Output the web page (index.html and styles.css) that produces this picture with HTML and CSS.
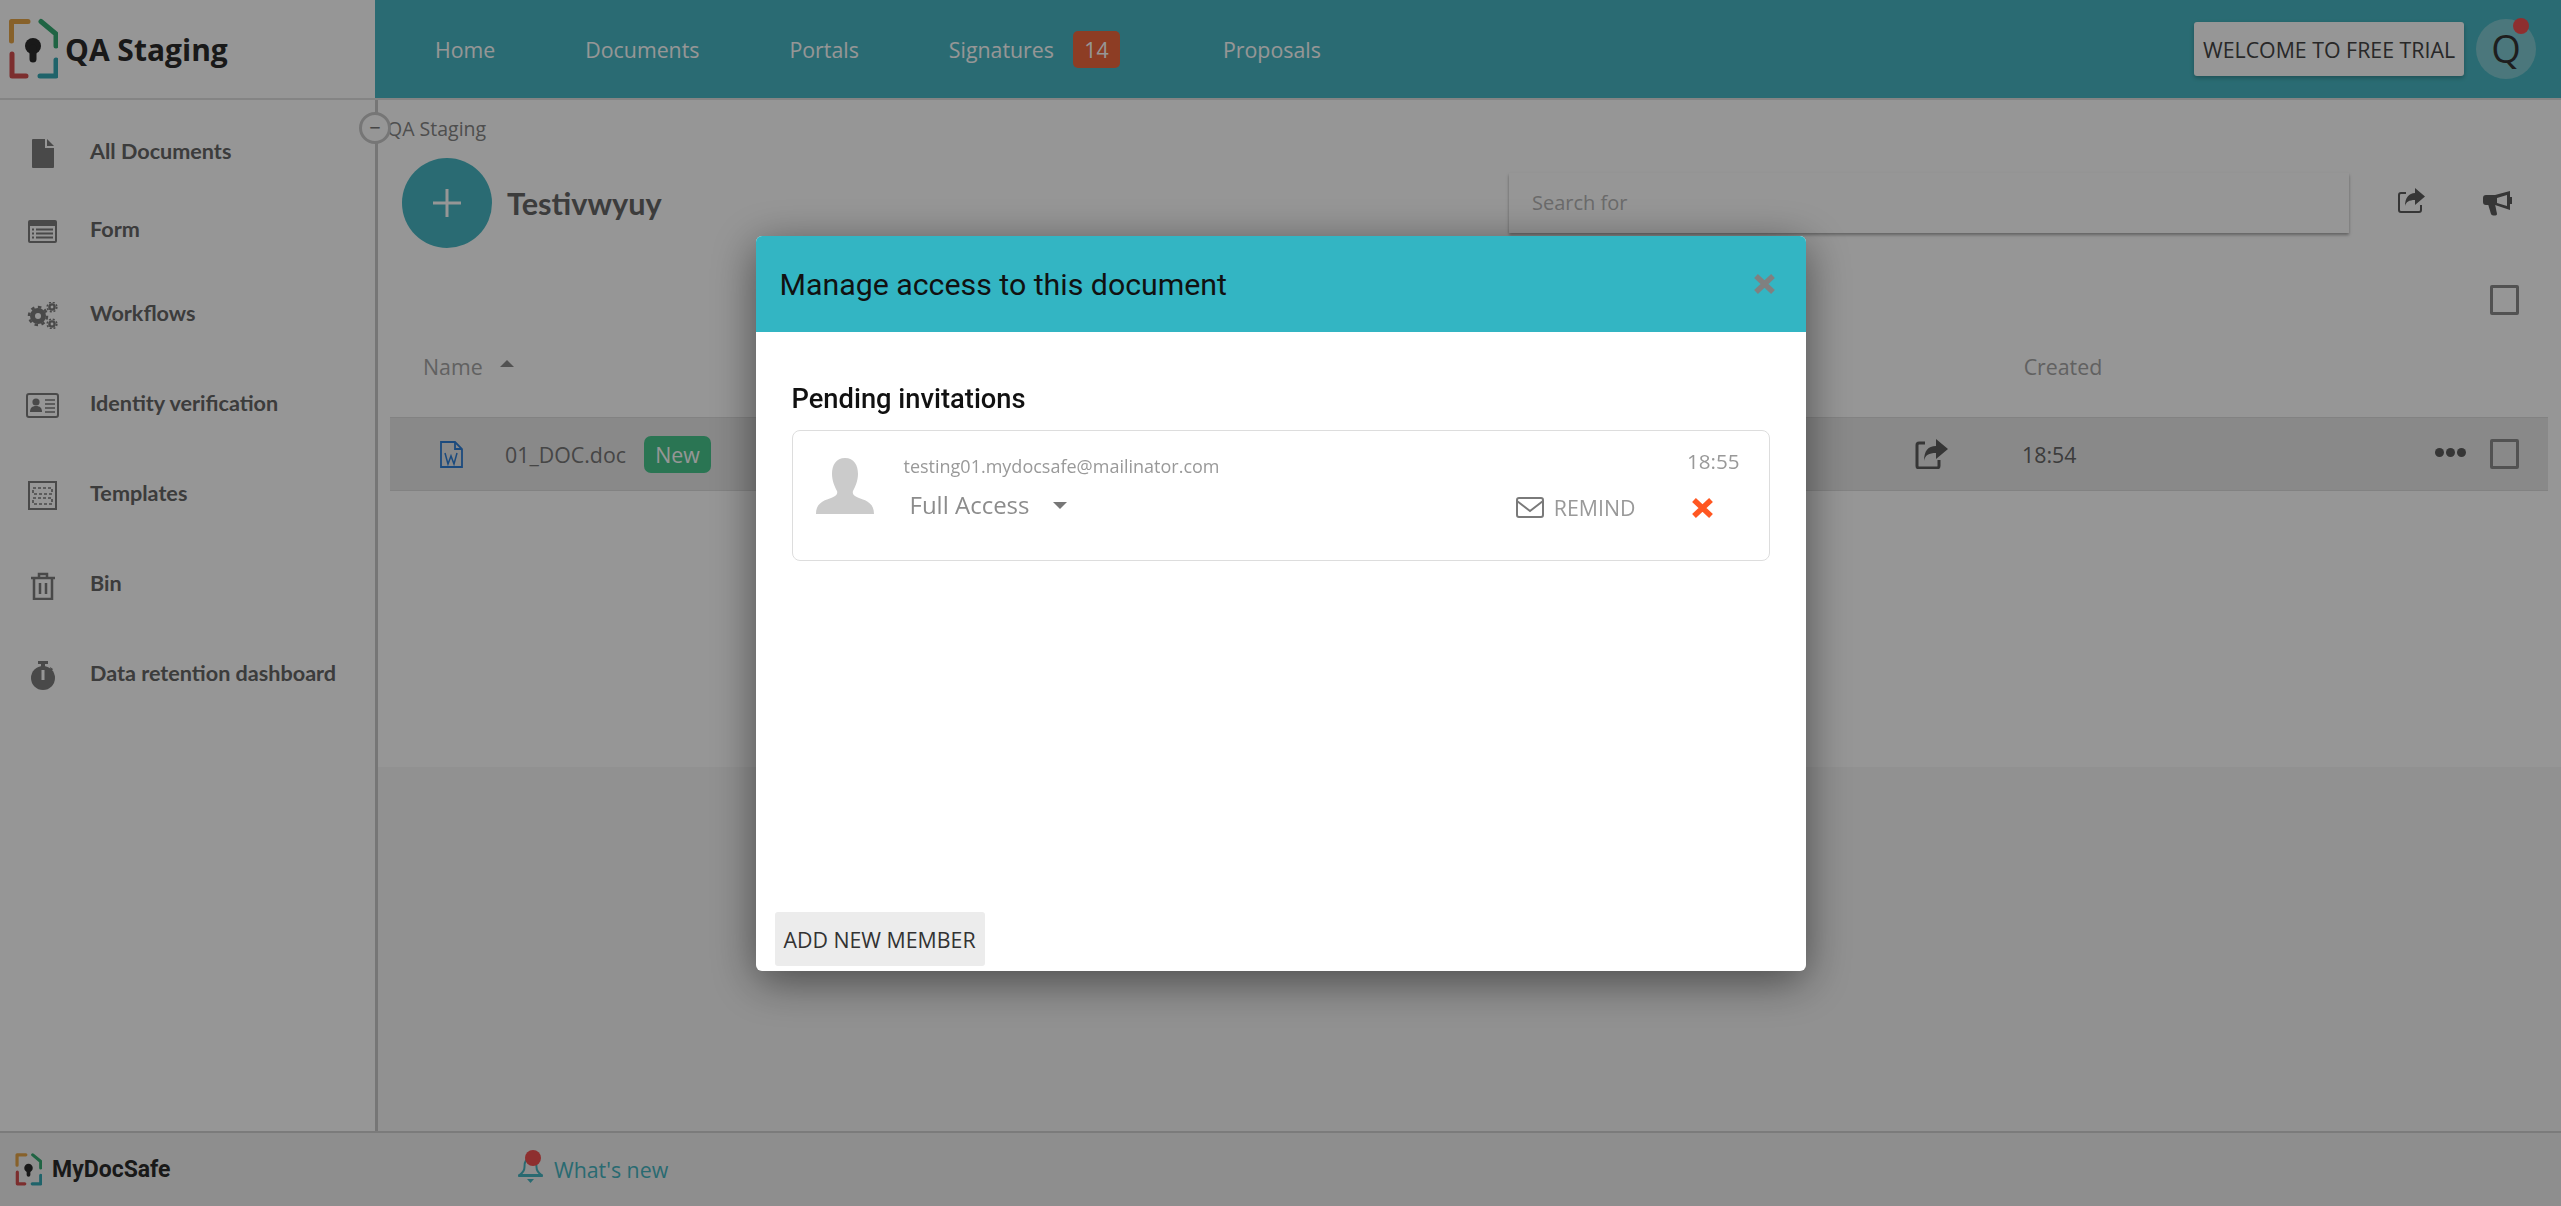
FILE: index.html
```html
<!DOCTYPE html>
<html lang="en">
<head>
    <meta charset="UTF-8">
    <meta name="viewport" content="width=device-width, initial-scale=1.0">
    <title>QA Staging</title>
    <link rel="stylesheet" href="styles.css">
</head>
<body>
    <div class="app">
        <header class="topbar">
            <div class="brand">
                <svg class="brand-logo" viewBox="0 0 50 62" fill="none" stroke-width="5" stroke-linecap="round" stroke-linejoin="round">
                    <path d="M3.5 23V3.5H20" stroke="#e6a548"/>
                    <path d="M33 3.5L48 16V28" stroke="#36ab72"/>
                    <path d="M48 42V58H32" stroke="#36a9b5"/>
                    <path d="M4 36V58H18" stroke="#d34f4f"/>
                    <circle cx="25" cy="28" r="8" fill="#2b2b2b" stroke="none"/>
                    <path d="M25 30V41" stroke="#2b2b2b" stroke-width="7"/>
                </svg>
                <span class="brand-name">QA Staging</span>
            </div>
            <nav class="topnav">
                <a href="#home">Home</a>
                <a href="#documents">Documents</a>
                <a href="#portals">Portals</a>
                <a href="#signatures" class="nav-sign">Signatures <span class="nav-badge">14</span></a>
                <a href="#proposals">Proposals</a>
                <button class="trial-btn">WELCOME TO FREE TRIAL</button>
                <div class="user-circle">Q<span class="user-dot"></span></div>
            </nav>
        </header>

        <div class="middle">
            <aside class="sidebar">
                <a class="side-item" href="#all">
                    <span class="side-icon"><svg width="22" height="29" viewBox="0 0 22 29"><path d="M1 0H13V9H22V28a1 1 0 0 1-1 1H1a1 1 0 0 1-1-1V1a1 1 0 0 1 1-1z" fill="#7d7d7d"/><path d="M15 0l7 7h-7z" fill="#7d7d7d"/></svg></span>
                    All Documents
                </a>
                <a class="side-item item-form" href="#form">
                    <span class="side-icon"><svg width="29" height="23" viewBox="0 0 29 23"><rect width="29" height="23" rx="2" fill="#7d7d7d"/><rect x="2" y="6" width="25" height="15" fill="#fff"/><path d="M4 9.500h2M8 9.500h17M4 13.500h2M8 13.500h17M4 17.500h2M8 17.500h17" stroke="#7d7d7d" stroke-width="2"/></svg></span>
                    Form
                </a>
                <a class="side-item item-flow" href="#workflows">
                    <span class="side-icon"><svg width="31" height="27" viewBox="0 0 31 27" fill="none" stroke="#7d7d7d"><circle cx="11" cy="14" r="5.500" stroke-width="5"/><circle cx="11" cy="14" r="9" stroke-width="2.500" stroke-dasharray="3.500 3.500"/><circle cx="25" cy="5" r="2.600" stroke-width="2.400"/><circle cx="25" cy="5" r="4.800" stroke-width="1.600" stroke-dasharray="2 1.800"/><circle cx="25" cy="22" r="2.600" stroke-width="2.400"/><circle cx="25" cy="22" r="4.800" stroke-width="1.600" stroke-dasharray="2 1.800"/></svg></span>
                    Workflows
                </a>
                <a class="side-item" href="#identity">
                    <span class="side-icon"><svg width="33" height="25" viewBox="0 0 33 25"><rect x="1" y="1" width="31" height="23" rx="2" fill="none" stroke="#7d7d7d" stroke-width="2"/><circle cx="10" cy="9" r="3.600" fill="#7d7d7d"/><path d="M4 19c0-4 2-6 6-6s6 2 6 6z" fill="#7d7d7d"/><path d="M19 7h10M19 11h10M19 15h10M19 19h10" stroke="#7d7d7d" stroke-width="1.600"/></svg></span>
                    Identity verification
                </a>
                <a class="side-item" href="#templates">
                    <span class="side-icon"><svg width="29" height="29" viewBox="0 0 29 29" fill="none" stroke="#7d7d7d"><rect x="1" y="1" width="27" height="27" stroke-width="2"/><rect x="5" y="7" width="19" height="6" stroke-width="1.600" stroke-dasharray="3 2"/><rect x="5" y="17" width="19" height="6" stroke-width="1.600" stroke-dasharray="3 2"/></svg></span>
                    Templates
                </a>
                <a class="side-item" href="#bin">
                    <span class="side-icon"><svg width="24" height="28" viewBox="0 0 24 28" fill="none" stroke="#7d7d7d" stroke-width="2.500"><path d="M0 6H24"/><path d="M8 5V2h8v3"/><path d="M3 6V27H21V6"/><path d="M9 11V22M15 11V22"/></svg></span>
                    Bin
                </a>
                <a class="side-item" href="#retention">
                    <span class="side-icon"><svg width="24" height="29" viewBox="0 0 24 29"><rect x="7" y="0" width="10" height="3" fill="#7d7d7d"/><rect x="10" y="2" width="4" height="4" fill="#7d7d7d"/><path d="M19 6l3 2-2 3z" fill="#7d7d7d"/><circle cx="12" cy="17" r="12" fill="#7d7d7d"/><rect x="10.500" y="9" width="3" height="10" fill="#fff"/></svg></span>
                    Data retention dashboard
                </a>
            </aside>

            <main class="content">
                <button class="collapse-btn">&minus;</button>
                <div class="docs-area">
                    <div class="crumb">QA Staging</div>
                    <div class="title-row">
                        <button class="add-btn"><svg width="28" height="28" viewBox="0 0 28 28"><path d="M14 0V28M0 14H28" stroke="#fff" stroke-width="3"/></svg></button>
                        <h1>Testivwyuy</h1>
                        <div class="search-box">Search for</div>
                        <svg class="tool-share" width="27" height="25" viewBox="0 0 27 25"><path d="M17 5V0l10 8.500-10 8.500V12c-6 0-9 2-10 6 0-8 4-13 10-13z" fill="#5c5c5c"/><path d="M8 5H3a2 2 0 0 0-2 2v15a2 2 0 0 0 2 2h18a2 2 0 0 0 2-2v-5" fill="none" stroke="#5c5c5c" stroke-width="2"/></svg>
                        <svg class="tool-horn" width="29" height="25" viewBox="0 0 29 25"><path d="M27 0v19L12 14H3a3 3 0 0 1-3-3V7a3 3 0 0 1 3-3h9z" fill="#5c5c5c"/><path d="M24 4v11l-10-3V7z" fill="#fff"/><path d="M5 13h7l2 10c0 2-5 2-6 0z" fill="#5c5c5c"/><rect x="26" y="6" width="3" height="7" fill="#5c5c5c"/></svg>
                    </div>
                    <div class="check-row"><span class="checkbox"></span></div>
                    <div class="table-head">
                        <span class="head-name">Name</span>
                        <span class="sort-up"></span>
                        <span class="head-created">Created</span>
                    </div>
                    <div class="doc-row">
                        <svg class="word-icon" width="23" height="27" viewBox="0 0 23 27" fill="none" stroke="#2f7fd6" stroke-width="1.800"><path d="M1 1H15L22 8V26H1z"/><path d="M15 1V8H22"/><path d="M5 12l3 11 3-8 3 8 3-11" stroke-width="1.500"/></svg>
                        <span class="doc-name">01_DOC.doc</span>
                        <span class="new-tag">New</span>
                        <svg class="row-share" width="33" height="30" viewBox="0 0 33 30"><path d="M21 7V0l12 10-12 10v-6c-7 0-11 2-12 8 0-10 4-15 12-15z" fill="#5c5c5c"/><path d="M10 4H4a2 2 0 0 0-2 2v21a2 2 0 0 0 2 2h18a2 2 0 0 0 2-2v-6" fill="none" stroke="#5c5c5c" stroke-width="3"/></svg>
                        <span class="doc-time">18:54</span>
                        <span class="dots"><i></i><i></i><i></i></span>
                        <span class="checkbox"></span>
                    </div>
                </div>
                <div class="lower-band"></div>
            </main>
        </div>

        <footer class="bottombar">
            <svg class="foot-logo" viewBox="0 0 50 62" fill="none" stroke-width="6" stroke-linecap="round" stroke-linejoin="round">
                <path d="M3.500 23V3.500H20" stroke="#e6a548"/>
                <path d="M33 3.500L48 16V28" stroke="#36ab72"/>
                <path d="M48 42V58H32" stroke="#36a9b5"/>
                <path d="M4 36V58H18" stroke="#d34f4f"/>
                <circle cx="25" cy="28" r="8" fill="#2b2b2b" stroke="none"/>
                <path d="M25 30V41" stroke="#2b2b2b" stroke-width="7"/>
            </svg>
            <span class="foot-name">MyDocSafe</span>
            <svg class="bell" width="25" height="34" viewBox="0 0 25 34">
                <path d="M12.500 8c-5 0-6 4-6 9 0 4-2 6-5 8v1h22v-1c-3-2-5-4-5-8 0-5-1-9-6-9z" fill="none" stroke="#46b5c1" stroke-width="2"/>
                <rect x="0" y="24" width="25" height="3" rx="1.500" fill="#46b5c1"/>
                <path d="M9 29h7l-3.500 4z" fill="#46b5c1"/>
                <circle cx="15" cy="8" r="8" fill="#f25050"/>
            </svg>
            <a class="whats-new" href="#new">What's new</a>
        </footer>
    </div>

    <div class="overlay">
        <section class="modal">
            <div class="modal-head">
                <h2>Manage access to this document</h2>
                <svg width="23" height="22" viewBox="0 0 23 22"><path d="M3 3L20 19M20 3L3 19" stroke="#808080" stroke-width="5.500"/></svg>
            </div>
            <div class="modal-body">
                <h3>Pending invitations</h3>
                <div class="invite-card">
                    <svg class="avatar" width="58" height="56" viewBox="0 0 58 56"><path d="M29 0c9 0 13 7 13 16 0 7-3 13-5 17-1 3 1 5 6 7 9 3 15 6 15 16H0c0-10 6-13 15-16 5-2 7-4 6-7-2-4-5-10-5-17C16 7 20 0 29 0z" fill="#cbcbcb"/></svg>
                    <div class="invite-info">
                        <div class="invite-email">testing01.mydocsafe@mailinator.com</div>
                        <div class="invite-access">Full Access <span class="caret"></span></div>
                    </div>
                    <div class="invite-side">
                        <div class="invite-time">18:55</div>
                        <div class="invite-actions">
                            <svg width="28" height="21" viewBox="0 0 28 21" fill="none" stroke="#7a7a7a" stroke-width="2"><rect x="1" y="1" width="26" height="19" rx="2"/><path d="M1 4l13 10L27 4"/></svg>
                            <span class="remind">REMIND</span>
                            <svg class="remove" width="23" height="22" viewBox="0 0 23 22"><path d="M3 3L20 19M20 3L3 19" stroke="#ff5722" stroke-width="5.500"/></svg>
                        </div>
                    </div>
                </div>
                <button class="add-member">ADD NEW MEMBER</button>
            </div>
        </section>
    </div>
</body>
</html>
```

FILE: styles.css
```css
* {
    box-sizing: border-box;
}

html, body {
    margin: 0;
    height: 100%;
    overflow: hidden;
}

body {
    font-family: "Open Sans", sans-serif;
    font-size: 21.33px;
    color: #666;
    background: #fff;
}

a {
    color: inherit;
    text-decoration: none;
}

button {
    font-family: inherit;
    border: none;
}

.app {
    height: 100vh;
    display: flex;
    flex-direction: column;
}

/* top bar */
.topbar {
    height: 100px;
    display: flex;
    border-bottom: 2px solid #e0e0e0;
    flex-shrink: 0;
}

.brand {
    width: 375px;
    display: flex;
    align-items: center;
    padding-left: 8px;
}

.brand-logo {
    width: 50px;
    height: 62px;
}

.brand-name {
    font-size: 30px;
    font-weight: 700;
    color: #2b2b2b;
    margin-left: 7px;
}

.topnav {
    flex: 1;
    display: flex;
    align-items: center;
    gap: 90px;
    padding: 0 25px 0 60px;
    background: #48b7c3;
    color: #fff;
}

.nav-sign {
    display: flex;
    align-items: center;
    gap: 19px;
    margin-right: 13px;
}

.nav-badge {
    width: 47px;
    height: 37px;
    border-radius: 5px;
    background: #f0683e;
    text-align: center;
    line-height: 37px;
}

.trial-btn {
    margin-left: auto;
    width: 270px;
    height: 54px;
    border-radius: 3px;
    background: #fff;
    color: #444;
    font-size: 21.33px;
    box-shadow: 0 2px 4px rgba(0, 0, 0, 0.25);
    padding: 0;
}

.user-circle {
    position: relative;
    width: 60px;
    height: 60px;
    margin-left: -78px;
    border-radius: 50%;
    background: #80cbd3;
    color: #333;
    font-size: 38px;
    line-height: 58px;
    text-align: center;
}

.user-dot {
    position: absolute;
    top: -1px;
    right: 7px;
    width: 16px;
    height: 16px;
    border-radius: 50%;
    background: #f25050;
}

/* sidebar + main */
.middle {
    flex: 1;
    display: flex;
    min-height: 0;
}

.sidebar {
    width: 378px;
    padding-top: 6px;
    border-right: 3px solid #c9c9c9;
    flex-shrink: 0;
}

.side-item {
    height: 90px;
    display: flex;
    align-items: center;
    font-family: Lato, sans-serif;
    font-size: 21.600px;
    font-weight: 700;
    color: #666;
}

.item-form {
    height: 66px;
}

.item-flow {
    margin-top: 6px;
}

.side-icon {
    width: 35px;
    margin: 5px 30px 0 25px;
    display: flex;
    justify-content: center;
}

.content {
    position: relative;
    flex: 1;
    display: flex;
    flex-direction: column;
}

.collapse-btn {
    position: absolute;
    top: 12px;
    left: -19px;
    width: 32px;
    height: 32px;
    padding: 0;
    border: 3px solid #c9c9c9;
    border-radius: 50%;
    background: #fff;
    color: #777;
    font-size: 20px;
    line-height: 22px;
}

.docs-area {
    height: 667px;
    background: #fff;
}

.lower-band {
    flex: 1;
    background: #f7f7f7;
}

.crumb {
    padding: 15px 0 0 9px;
    height: 58px;
    font-size: 19.500px;
    color: #858585;
}

.title-row {
    display: flex;
    align-items: center;
    height: 90px;
    padding-left: 24px;
}

.add-btn {
    width: 90px;
    height: 90px;
    padding: 0;
    border-radius: 50%;
    background: #48b7c3;
    display: flex;
    align-items: center;
    justify-content: center;
}

.title-row h1 {
    margin: 0 0 0 15px;
    width: 1002px;
    font-family: Lato, sans-serif;
    font-size: 30.67px;
    font-weight: 700;
    color: #666;
}

.search-box {
    width: 840px;
    height: 60px;
    padding-left: 23px;
    line-height: 60px;
    font-size: 20px;
    color: #b5b5b5;
    background: #fff;
    box-shadow: 0 2px 3px rgba(0, 0, 0, 0.35);
}

.tool-share {
    margin: -6px 0 0 49px;
}

.tool-horn {
    margin-left: 58px;
}

.check-row {
    height: 67px;
    padding: 37px 0 0 2112px;
}

.checkbox {
    display: block;
    width: 29px;
    height: 30px;
    border: 3px solid #8c8c8c;
    border-radius: 2px;
    flex-shrink: 0;
}

.table-head {
    height: 102px;
    display: flex;
    align-items: center;
    padding-left: 45px;
    color: #a5a5a5;
}

.sort-up {
    width: 0;
    height: 0;
    margin: -6px 0 0 17px;
    border-left: 7px solid transparent;
    border-right: 7px solid transparent;
    border-bottom: 7px solid #8c8c8c;
}

.head-created {
    margin-left: 1510px;
}

.doc-row {
    width: 2158px;
    height: 74px;
    margin-left: 12px;
    display: flex;
    align-items: center;
    padding-left: 50px;
    background: #e9e9e9;
    border-top: 1px solid #dedede;
    border-bottom: 1px solid #dedede;
}

.doc-name {
    margin-left: 42px;
    width: 120px;
    color: #777;
    white-space: nowrap;
}

.new-tag {
    width: 67px;
    height: 37px;
    margin-left: 19px;
    border-radius: 7px;
    background: #48c78e;
    color: #fff;
    line-height: 37px;
    text-align: center;
}

.row-share {
    margin-left: 1204px;
}

.doc-time {
    margin-left: 74px;
    color: #666;
}

.dots {
    display: flex;
    gap: 2px;
    margin-left: 359px;
    margin-top: -3px;
}

.dots i {
    width: 9px;
    height: 9px;
    border-radius: 50%;
    background: #5c5c5c;
}

.doc-row .checkbox {
    margin-left: 24px;
}

/* footer */
.bottombar {
    height: 75px;
    display: flex;
    align-items: center;
    padding-left: 15px;
    background: #f2f2f2;
    border-top: 2px solid #d2d2d2;
    flex-shrink: 0;
}

.foot-logo {
    width: 27px;
    height: 33px;
}

.foot-name {
    margin-left: 10px;
    font-family: Roboto, sans-serif;
    font-size: 23px;
    font-weight: 700;
    color: #2b2b2b;
    width: 466px;
}

.bell {
    margin: -6px 11px 0 0;
}

.whats-new {
    color: #46b5c1;
}

/* modal */
.overlay {
    position: fixed;
    inset: 0;
    display: flex;
    justify-content: center;
    align-items: flex-start;
    padding-top: 236px;
    background: rgba(0, 0, 0, 0.41);
}

.modal {
    width: 1050px;
    height: 735px;
    display: flex;
    flex-direction: column;
    border-radius: 6px;
    background: #fff;
    box-shadow: 0 10px 45px rgba(0, 0, 0, 0.5);
    overflow: hidden;
}

.modal-head {
    height: 96px;
    display: flex;
    align-items: center;
    justify-content: space-between;
    padding: 0 30px 0 24px;
    background: #33b5c3;
}

.modal-head h2 {
    margin: 0;
    font-family: Roboto, sans-serif;
    font-size: 30.300px;
    font-weight: 400;
    color: #111;
}

.modal-body {
    flex: 1;
    display: flex;
    flex-direction: column;
    padding: 0 36px;
}

.modal-body h3 {
    margin: 51px 0 15px;
    font-family: Roboto, sans-serif;
    font-size: 27.300px;
    font-weight: 500;
    line-height: 32px;
    color: #111;
}

.invite-card {
    height: 131px;
    display: flex;
    padding: 27px 29px 0 23px;
    border: 1px solid #dddddd;
    border-radius: 8px;
}

.invite-info {
    margin-left: 30px;
}

.invite-email {
    margin-top: -5px;
    font-size: 18px;
    line-height: 26px;
    color: #999;
}

.invite-access {
    margin: 10px 0 0 6px;
    display: flex;
    align-items: center;
    font-size: 24px;
    line-height: 32px;
    color: #8c8c8c;
}

.caret {
    width: 0;
    height: 0;
    margin-left: 24px;
    border-left: 7px solid transparent;
    border-right: 7px solid transparent;
    border-top: 7px solid #777;
}

.invite-side {
    margin-left: auto;
    margin-top: -11px;
    display: flex;
    flex-direction: column;
    align-items: flex-end;
}

.invite-time {
    font-size: 20.600px;
    line-height: 28px;
    color: #999;
}

.invite-actions {
    display: flex;
    align-items: center;
    margin-top: 18px;
}

.remind {
    margin-left: 10px;
    color: #999;
}

.remove {
    margin: 0 26px 0 55px;
}

.add-member {
    width: 210px;
    height: 54px;
    margin: auto 0 5px -17px;
    padding: 0;
    border-radius: 3px;
    background: #ececec;
    color: #333;
    font-size: 21.33px;
}
```
